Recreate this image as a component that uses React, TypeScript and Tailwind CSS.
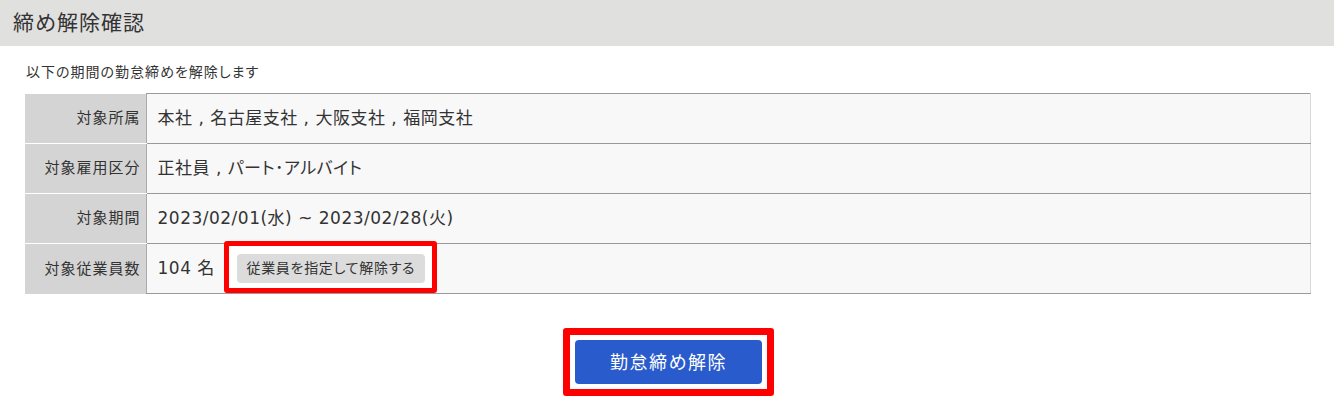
const rows = [
  { label: "対象所属", value: "本社 , 名古屋支社 , 大阪支社 , 福岡支社" },
  { label: "対象雇用区分", value: "正社員 , パート･アルバイト" },
  { label: "対象期間", value: "2023/02/01(水) ~ 2023/02/28(火)" },
];

export default function App() {
  return (
    <div className="min-h-screen bg-white text-[#333] font-['DejaVu_Sans','Noto_Sans_CJK_JP',sans-serif] [font-feature-settings:'palt']">
      {/* Title bar */}
      <header className="h-[46px] bg-[#e0e0df] flex items-center px-[13px]">
        <h1 className="text-[21px] tracking-[1px] leading-none">締め解除確認</h1>
      </header>

      <div className="pl-[25px] pr-[23px]">
        <p className="text-[14px] tracking-[1px] pt-[16px] pb-[11px] leading-[20px] pl-[1px]">
          以下の期間の勤怠締めを解除します
        </p>

        <table className="w-full border-collapse">
          <tbody>
            {rows.map((r) => (
              <tr key={r.label} className="h-[50px]">
                <th className="w-[121px] bg-[#d4d4d4] border-b border-white text-right font-normal text-[15px] tracking-[1px] pr-[5px]">
                  {r.label}
                </th>
                <td className="bg-[#f8f8f8] border-y border-[#9a9a9a] border-l border-l-[#aaa] border-r border-r-[#d8d8d8] pl-[11px] text-[17px] tracking-[0.5px]">
                  {r.value}
                </td>
              </tr>
            ))}
            <tr className="h-[50px]">
              <th className="w-[121px] bg-[#d4d4d4] text-right font-normal text-[15px] tracking-[1px] pr-[5px]">
                対象従業員数
              </th>
              <td className="bg-[#f8f8f8] border-y border-[#9a9a9a] border-l border-l-[#aaa] border-r border-r-[#d8d8d8] pl-[11px] text-[17px] tracking-[0.5px]">
                <div className="flex items-center">
                  <span>104 名</span>
                  <span className="relative ml-[22px] inline-flex">
                    {/* highlight frame */}
                    <span className="absolute -left-[13px] -top-[13px] -right-[12px] -bottom-[10px] border-[5px] border-[#f00] rounded-[3px] bg-white" />
                    <button className="relative h-[29px] w-[188px] bg-[#dcdcdc] rounded-[4px] text-[14px] tracking-[0.7px] text-[#333]">
                      従業員を指定して解除する
                    </button>
                  </span>
                </div>
              </td>
            </tr>
          </tbody>
        </table>
      </div>

      <div className="flex justify-center pt-[34px] pl-[3px]">
        <div className="border-[7px] border-[#f00] rounded-[3px] p-[5px]">
          <button className="h-[44px] w-[187px] bg-[#2a5bcc] rounded-[4px] text-white text-[18px] tracking-[1.5px]">
            勤怠締め解除
          </button>
        </div>
      </div>
    </div>
  );
}
